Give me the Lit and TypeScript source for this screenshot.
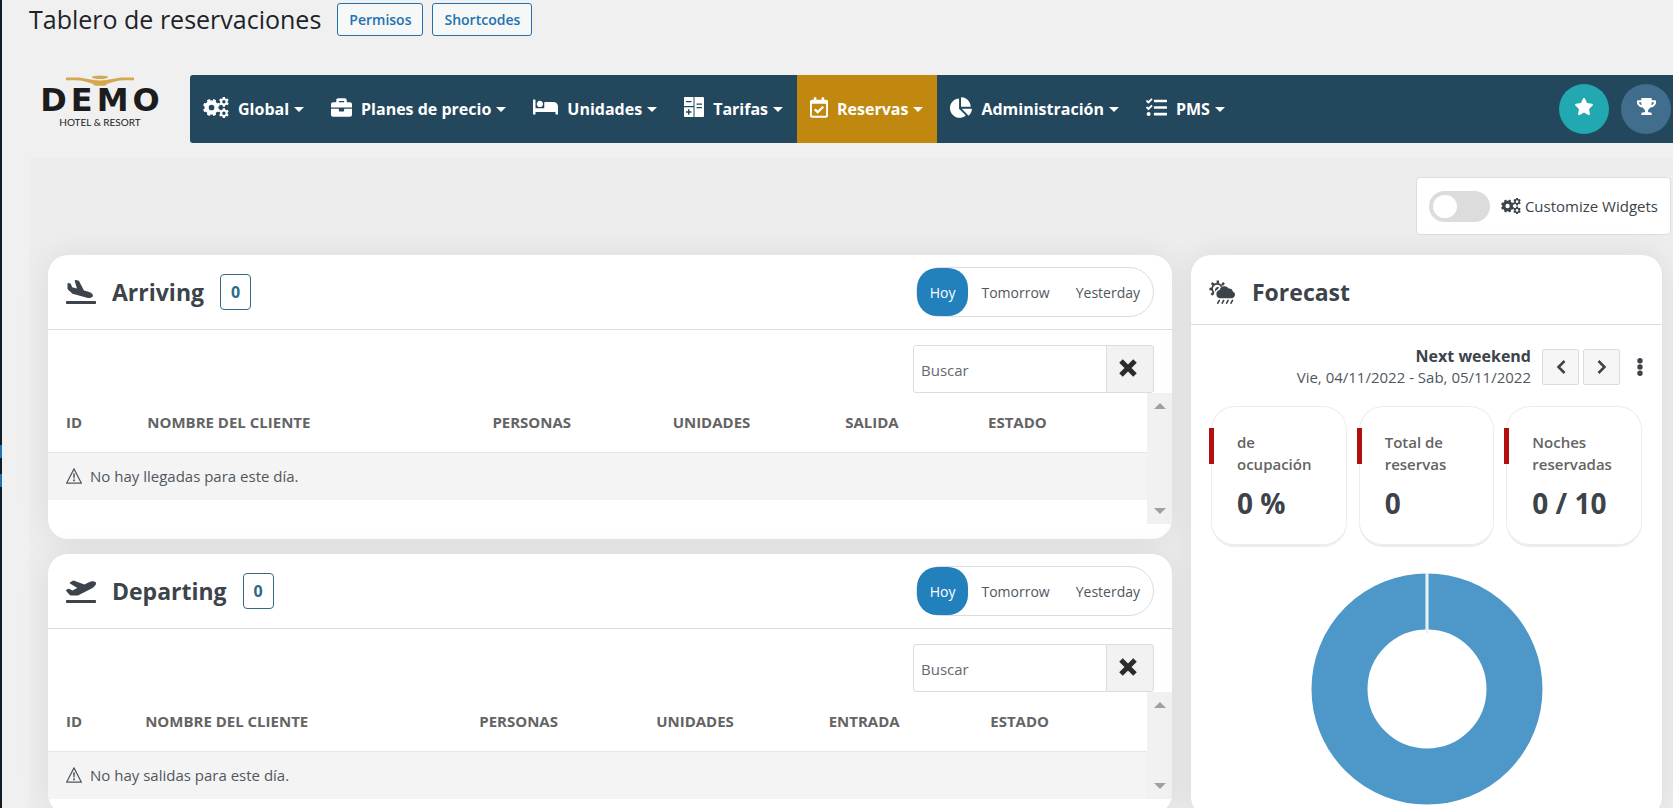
import { LitElement, html, css, svg } from "lit";
import { customElement, property, state } from "lit/decorators.js";
import { classMap } from "lit/directives/class-map.js";

/* Outline of a toothed wheel with a round hole, used by the cogs icon. */
function gear(cx: number, cy: number, outer: number, inner: number, hole: number, teeth: number, turn = 0): string {
  const step = (Math.PI * 2) / teeth;
  const pts: string[] = [];
  for (let i = 0; i < teeth; i++) {
    const a = i * step + turn;
    const spots: [number, number][] = [
      [inner, a - step * 0.32],
      [outer, a - step * 0.21],
      [outer, a + step * 0.21],
      [inner, a + step * 0.32],
    ];
    for (const [r, t] of spots) {
      pts.push(`${(cx + r * Math.cos(t)).toFixed(1)} ${(cy + r * Math.sin(t)).toFixed(1)}`);
    }
  }
  return `M${pts.join("L")}ZM${cx - hole} ${cy}a${hole} ${hole} 0 1 0 ${hole * 2} 0a${hole} ${hole} 0 1 0 ${-hole * 2} 0Z`;
}

const COGS =
  gear(210, 256, 212, 172, 70, 8, Math.PI / 8) +
  gear(514, 116, 124, 94, 42, 6, Math.PI / 6) +
  gear(514, 396, 124, 94, 42, 6, Math.PI / 6);

const ICONS: Record<string, { box: string; art: unknown }> = {
  cogs: { box: "0 0 640 512", art: svg`<path fill-rule="evenodd" d=${COGS} />` },
  briefcase: {
    box: "0 0 512 512",
    art: svg`<path d="M320 336c0 8.84-7.16 16-16 16h-96c-8.84 0-16-7.16-16-16v-48H0v144c0 25.6 22.4 48 48 48h416c25.6 0 48-22.4 48-48V288H320v48zm144-208h-80V80c0-25.6-22.4-48-48-48H176c-25.6 0-48 22.4-48 48v48H48c-25.6 0-48 22.4-48 48v80h512v-80c0-25.6-22.4-48-48-48zm-144 0H192V96h128v32z" />`,
  },
  bed: {
    box: "0 0 640 512",
    art: svg`<path d="M176 256c44.11 0 80-35.89 80-80s-35.89-80-80-80-80 35.89-80 80 35.89 80 80 80zm352-128H304c-8.84 0-16 7.16-16 16v144H64V80c0-8.84-7.16-16-16-16H16C7.16 64 0 71.16 0 80v352c0 8.84 7.16 16 16 16h32c8.84 0 16-7.16 16-16v-48h512v48c0 8.84 7.16 16 16 16h32c8.84 0 16-7.16 16-16V240c0-61.86-50.14-112-112-112z" />`,
  },
  rates: {
    box: "0 0 20 20",
    art: svg`<path fill-rule="evenodd" d="M1 0h8.500v9H0V1a1 1 0 0 1 1-1zM2 4v1.300h5.500V4zM0 10.200h9.500V20H1a1 1 0 0 1-1-1zM4 12.300v2H2v1.400h2v2h1.400v-2h2v-1.400h-2v-2zM10.500 0H19a1 1 0 0 1 1 1v18a1 1 0 0 1-1 1h-8.500zM12.500 6.500v1.300h5.500V6.500zM12.500 10v1.300h5.500V10z" />`,
  },
  calendar: {
    box: "0 0 448 512",
    art: svg`<path d="M400 64h-48V12c0-6.627-5.373-12-12-12h-40c-6.627 0-12 5.373-12 12v52H160V12c0-6.627-5.373-12-12-12h-40c-6.627 0-12 5.373-12 12v52H48C21.49 64 0 85.49 0 112v352c0 26.51 21.49 48 48 48h352c26.51 0 48-21.49 48-48V112c0-26.51-21.49-48-48-48zm-6 400H54a6 6 0 0 1-6-6V160h352v298a6 6 0 0 1-6 6zm-52.849-200.65L198.842 404.519c-4.705 4.667-12.303 4.637-16.971-.068l-75.091-75.699c-4.667-4.705-4.637-12.303.068-16.971l22.719-22.536c4.705-4.667 12.303-4.637 16.97.069l44.104 44.461 111.072-110.181c4.705-4.667 12.303-4.637 16.971.068l22.536 22.718c4.667 4.705 4.636 12.303-.069 16.97z" />`,
  },
  pie: {
    box: "0 0 544 512",
    art: svg`<path d="M527.79 288H290.5l158.03 158.03c6.04 6.04 15.98 6.53 22.19.68 38.7-36.46 65.32-85.61 73.13-140.86 1.34-9.46-6.51-17.85-16.06-17.85zm-15.83-64.8C503.72 103.74 408.26 8.28 288.8.04 279.68-.59 272 7.1 272 16.24V240h223.77c9.14 0 16.82-7.68 16.19-16.8zM224 288V50.71c0-9.55-8.39-17.4-17.84-16.06C86.99 51.49-4.1 155.6.14 280.37 4.5 408.51 114.83 513.59 243.03 511.98c50.4-.63 96.97-16.87 135.26-44.03 7.9-5.6 8.42-17.23 1.57-24.08L224 288z" />`,
  },
  tasks: {
    box: "0 0 512 512",
    art: svg`<path d="M139.61 35.5a12 12 0 0 0-17 0L58.93 98.81l-22.7-22.12a12 12 0 0 0-17 0L3.53 92.41a12 12 0 0 0 0 17l47.59 47.4a12.78 12.78 0 0 0 17.61 0l15.59-15.62L156.52 69a12.09 12.09 0 0 0 .09-17zm0 159.19a12 12 0 0 0-17 0l-63.68 63.72-22.7-22.1a12 12 0 0 0-17 0L3.53 252a12 12 0 0 0 0 17L51 316.5a12.77 12.77 0 0 0 17.6 0l15.7-15.69 72.2-72.22a12 12 0 0 0 .09-16.9zM64 368c-26.49 0-48.59 21.5-48.59 48S37.53 464 64 464a48 48 0 0 0 0-96zm432 16H208a16 16 0 0 0-16 16v32a16 16 0 0 0 16 16h288a16 16 0 0 0 16-16v-32a16 16 0 0 0-16-16zm0-320H208a16 16 0 0 0-16 16v32a16 16 0 0 0 16 16h288a16 16 0 0 0 16-16V80a16 16 0 0 0-16-16zm0 160H208a16 16 0 0 0-16 16v32a16 16 0 0 0 16 16h288a16 16 0 0 0 16-16v-32a16 16 0 0 0-16-16z" />`,
  },
  star: {
    box: "0 0 576 512",
    art: svg`<path d="M259.3 17.8L194 150.2 47.9 171.5c-26.2 3.8-36.7 36.1-17.7 54.6l105.7 103-25 145.5c-4.5 26.3 23.2 46 46.4 33.7L288 439.6l130.7 68.7c23.2 12.2 50.9-7.4 46.4-33.7l-25-145.5 105.7-103c19-18.5 8.5-50.8-17.7-54.6L382 150.2 316.7 17.8c-11.7-23.6-45.6-23.9-57.4 0z" />`,
  },
  trophy: {
    box: "0 0 576 512",
    art: svg`<path d="M552 64H448V24c0-13.3-10.7-24-24-24H152c-13.3 0-24 10.7-24 24v40H24C10.7 64 0 74.7 0 88v56c0 35.7 22.5 72.4 61.9 100.7 31.5 22.7 69.8 37.1 110 41.7C203.3 338.5 240 360 240 360v72h-48c-35.3 0-64 20.7-64 56v12c0 6.6 5.4 12 12 12h296c6.6 0 12-5.4 12-12v-12c0-35.3-28.7-56-64-56h-48v-72s36.7-21.5 68.1-73.6c40.3-4.6 78.6-19 110-41.7 39.3-28.3 61.9-65 61.9-100.7V88c0-13.3-10.7-24-24-24zM99.3 192.800C74.9 175.2 64 155.600 64 144v-16h64.2c1 32.600 5.800 61.2 12.800 86.2-15.100-5.2-29.2-12.4-41.700-21.4zM512 144c0 16.1-17.7 36.1-35.3 48.800-12.500 9-26.700 16.2-41.800 21.4 7-25 11.800-53.600 12.800-86.2H512v16z" />`,
  },
  arrival: {
    box: "0 0 640 512",
    art: svg`<path d="M624 448H16c-8.84 0-16 7.16-16 16v32c0 8.84 7.16 16 16 16h608c8.84 0 16-7.16 16-16v-32c0-8.84-7.16-16-16-16zM44.81 205.66l88.74 80a62.607 62.607 0 0 0 25.47 13.93l287.6 78.35c26.48 7.21 54.56 8.72 81 1.36 29.67-8.27 43.44-21.21 47.25-35.71 3.83-14.5-1.73-32.71-23.37-54.96-19.28-19.82-44.35-32.79-70.83-40l-97.51-26.56L282.8 30.22c-1.51-5.81-5.95-10.35-11.66-11.91L206.05.58c-10.56-2.88-20.9 5.32-20.71 16.44l47.92 164.21-102.2-27.84-27.59-67.88c-1.93-4.89-6.01-8.57-11.02-9.93L52.72 64.75c-10.34-2.82-20.53 5-20.72 15.88l.23 101.78c.19 8.91 6.03 17.34 12.58 23.25z" />`,
  },
  departure: {
    box: "0 0 640 512",
    art: svg`<path d="M624 448H16c-8.84 0-16 7.16-16 16v32c0 8.84 7.16 16 16 16h608c8.84 0 16-7.16 16-16v-32c0-8.84-7.16-16-16-16zM80.55 341.27c6.28 6.84 15.1 10.72 24.33 10.71l130.54-.18a65.62 65.62 0 0 0 29.64-7.12l290.96-147.65c26.74-13.57 50.71-32.94 67.02-58.31 18.31-28.48 20.3-49.09 13.07-63.65-7.21-14.57-24.74-25.27-58.25-27.45-29.85-1.94-59.54 5.92-86.28 19.48l-98.51 49.99-218.7-82.06a17.799 17.799 0 0 0-18-1.11L90.62 67.29c-10.67 5.41-13.25 19.65-5.17 28.53l156.22 98.1-103.21 52.38-72.35-36.47a17.804 17.804 0 0 0-16.07.02L9.91 230.22c-10.44 5.3-13.19 19.12-5.57 28.08l76.21 82.97z" />`,
  },
  weather: {
    box: "0 0 27 24",
    art: svg`<path fill="none" stroke="currentColor" stroke-width="1.800" d="M5 12.800a5 5 0 1 1 7.600-6" />
      <path fill="none" stroke="currentColor" stroke-width="2.400" d="M8.800 .4v3.200M2.600 3l2.300 2M.4 9h3M2.300 14.800l2.300-1.800M15 2.800l-2 2.300" />
      <path fill="none" stroke="currentColor" stroke-width="1.600" stroke-linecap="round" d="M10.300 20.400l-1.500 2.800M14.700 20.400l-1.500 2.800M19.100 20.400l-1.500 2.800M23.500 20.400l-1.500 2.800" />
      <path d="M11.500 18.200a4.200 4.200 0 0 1-.8-8.300 4.800 4.800 0 0 1 4.700-3.700 4.800 4.800 0 0 1 4.200 2.400 3.800 3.800 0 0 1 4.200 2.900 3.500 3.500 0 0 1-.6 6.700z" />
      <path d="M6.400 11.600a3 3 0 0 1 4-4.200 6.500 6.500 0 0 0-1.700 1.900 6 6 0 0 0-2.300 2.300z" />`,
  },
  warning: {
    box: "0 0 16 16",
    art: svg`<path fill="none" stroke="currentColor" stroke-width="1.200" stroke-linejoin="round" d="M8 .9L15.400 15.200H.6z" /><path d="M7.100 5.500h1.800l-.3 5h-1.200zM7.100 11.600h1.800v1.600H7.100z" />`,
  },
  cross: {
    box: "0 0 18 18",
    art: svg`<path fill="none" stroke="currentColor" stroke-width="5" d="M2 2l14 14M16 2L2 16" />`,
  },
  left: {
    box: "0 0 10 14",
    art: svg`<path fill="none" stroke="currentColor" stroke-width="2.500" d="M8.500 1L2.500 7l6 6" />`,
  },
  right: {
    box: "0 0 10 14",
    art: svg`<path fill="none" stroke="currentColor" stroke-width="2.500" d="M1.500 1l6 6-6 6" />`,
  },
  dots: {
    box: "0 0 6 18",
    art: svg`<circle cx="3" cy="2.700" r="2.700" /><circle cx="3" cy="9" r="2.700" /><circle cx="3" cy="15.300" r="2.700" />`,
  },
};

function icon(name: string, width: number, height: number) {
  const { box, art } = ICONS[name];
  return html`<svg viewBox=${box} width=${width} height=${height} fill="currentColor" aria-hidden="true">${art}</svg>`;
}

const shared = css`
  * {
    box-sizing: border-box;
  }
  svg {
    display: block;
    flex: none;
  }
  button {
    font: inherit;
    color: inherit;
    cursor: pointer;
    margin: 0;
    padding: 0;
    border: 0;
    background: none;
  }
`;

const card = css`
  :host {
    display: block;
    background: #fff;
    border-radius: 20px;
    box-shadow: 0 0 32px rgba(0, 0, 0, 0.08);
  }
  .head {
    display: flex;
    align-items: center;
    border-bottom: 1px solid #dcdcde;
    padding: 0 18px;
  }
  h2 {
    margin: 0 0 0 16px;
    font-size: 23px;
    line-height: 32px;
    font-weight: 700;
    color: #3c434a;
  }
`;

@customElement("nav-menu")
class NavMenu extends LitElement {
  static styles = [
    shared,
    css`
      :host {
        display: flex;
        flex: 1;
        min-width: 0;
        height: 68px;
        background: #23485e;
        border-radius: 3px 0 0 3px;
        color: #fff;
        font-size: 16px;
        font-weight: 700;
      }
      .item {
        display: flex;
        align-items: center;
        height: 68px;
        padding: 0 14px 4px 13px;
        white-space: nowrap;
      }
      .active {
        background: #c1880f;
      }
      .label {
        margin-left: 9px;
        padding-top: 4px;
      }
      .caret {
        margin: 4px 0 0 5px;
        border: 5px solid transparent;
        border-top-color: #fff;
        border-bottom: 0;
      }
      .extras {
        display: flex;
        align-items: center;
        gap: 12px;
        margin-left: auto;
        padding-right: 2px;
      }
      .round {
        display: grid;
        place-items: center;
        width: 50px;
        height: 50px;
        padding-bottom: 6px;
        border-radius: 50%;
        background: #406e8c;
      }
      .teal {
        background: #22a8b0;
      }
    `,
  ];

  private items: [string, string, number, number][] = [
    ["cogs", "Global", 26, 21],
    ["briefcase", "Planes de precio", 21, 21],
    ["bed", "Unidades", 25, 20],
    ["rates", "Tarifas", 20, 20],
    ["calendar", "Reservas", 18, 21],
    ["pie", "Administración", 22, 21],
    ["tasks", "PMS", 21, 21],
  ];

  render() {
    return html`
      ${this.items.map(
        ([glyph, label, w, h]) => html`<button class=${classMap({ item: true, active: label === "Reservas" })} aria-haspopup="menu">
          ${icon(glyph, w, h)}<span class="label">${label}</span><span class="caret"></span>
        </button>`
      )}
      <div class="extras">
        <button class="round teal" aria-label="Destacados">${icon("star", 20, 17)}</button>
        <button class="round" aria-label="Logros">${icon("trophy", 19, 17)}</button>
      </div>
    `;
  }
}

@customElement("guest-card")
class GuestCard extends LitElement {
  @property() glyph = "";
  @property() heading = "";
  @property() empty = "";
  @property({ attribute: false }) columns: [string, number][] = [];
  @property({ type: Boolean }) roomy = false;
  @state() private day = "Hoy";

  static styles = [
    shared,
    card,
    css`
      :host {
        padding-bottom: 15px;
      }
      .head {
        height: 75px;
      }
      .count {
        margin-left: 16px;
        width: 31px;
        line-height: 34px;
        text-align: center;
        border: 1px solid #336b87;
        border-radius: 4px;
        color: #2d6a87;
        font-size: 16px;
        font-weight: 700;
      }
      .days {
        display: flex;
        height: 50px;
        margin-left: auto;
        border: 1px solid #dcdcde;
        border-radius: 25px;
        font-size: 14px;
        color: #50575e;
      }
      .day {
        padding: 0 13px;
        border-radius: 20px;
      }
      .on {
        background: #2280bd;
        color: #fff;
      }
      .search {
        display: flex;
        justify-content: flex-end;
        padding: 15px 18px 0;
      }
      input {
        font: inherit;
        width: 194px;
        height: 48px;
        padding: 2px 7px 0;
        border: 1px solid #dcdcde;
        border-radius: 3px 0 0 3px;
        background: #fff;
        color: #3c434a;
      }
      input::placeholder {
        color: #646970;
        opacity: 1;
      }
      .clear {
        display: grid;
        place-items: center;
        width: 48px;
        padding: 0 4px 2px 0;
        border: 1px solid #dcdcde;
        margin-left: -1px;
        border-radius: 0 3px 3px 0;
        background: #f2f2f2;
        color: #2c2c2c;
      }
      .list {
        display: flex;
        min-height: 107px;
      }
      .roomy {
        min-height: 131px;
      }
      .data {
        flex: 1;
        min-width: 0;
      }
      table {
        width: 100%;
        table-layout: fixed;
        border-collapse: collapse;
      }
      th {
        height: 59px;
        padding: 0 18px;
        text-align: left;
        font-weight: 700;
        font-size: 15px;
        color: #646464;
        white-space: nowrap;
        border-bottom: 1px solid #e6e6e6;
      }
      td {
        height: 48px;
        padding: 0 18px;
        background: #f4f4f4;
        color: #50575e;
      }
      .note {
        display: flex;
        align-items: center;
        gap: 8px;
      }
      .bar {
        display: flex;
        flex-direction: column;
        justify-content: space-between;
        align-items: center;
        width: 25px;
        padding: 10px 0;
        background: #f1f1f1;
      }
      .up,
      .down {
        border: 6px solid transparent;
      }
      .up {
        border-bottom-color: #a0a0a0;
        border-top: 0;
      }
      .down {
        border-top-color: #a0a0a0;
        border-bottom: 0;
      }
    `,
  ];

  render() {
    return html`
      <div class="head">
        ${icon(this.glyph, 30, 24)}
        <h2>${this.heading}</h2>
        <span class="count">0</span>
        <div class="days">
          ${["Hoy", "Tomorrow", "Yesterday"].map(
            (d) => html`<button
              class=${classMap({ day: true, on: d === this.day })}
              aria-pressed=${d === this.day}
              @click=${() => (this.day = d)}
            >${d}</button>`
          )}
        </div>
      </div>
      <div class="search">
        <input type="text" placeholder="Buscar" aria-label="Buscar" />
        <button class="clear" aria-label="Borrar">${icon("cross", 18, 18)}</button>
      </div>
      <div class=${classMap({ list: true, roomy: this.roomy })}>
        <div class="data">
          <table>
            <colgroup>
              ${this.columns.map(([, w]) => html`<col style="width:${w}%" />`)}
            </colgroup>
            <thead>
              <tr>${this.columns.map(([name]) => html`<th scope="col">${name}</th>`)}</tr>
            </thead>
            <tbody>
              <tr>
                <td colspan="6"><div class="note">${icon("warning", 16, 16)}${this.empty}</div></td>
              </tr>
            </tbody>
          </table>
        </div>
        <div class="bar" aria-hidden="true"><span class="up"></span><span class="down"></span></div>
      </div>
    `;
  }
}

@customElement("forecast-card")
class ForecastCard extends LitElement {
  static styles = [
    shared,
    card,
    css`
      .head {
        height: 70px;
        padding-top: 5px;
      }
      .period {
        display: flex;
        align-items: center;
        justify-content: flex-end;
        padding: 16px 19px 0 20px;
        height: 67px;
      }
      .range {
        text-align: right;
        margin-right: 11px;
        line-height: 21px;
        font-size: 15px;
        color: #50575e;
      }
      .range strong {
        display: block;
        font-size: 16px;
        color: #3c434a;
      }
      .step {
        display: grid;
        place-items: center;
        width: 37px;
        height: 36px;
        margin-right: 4px;
        border: 1px solid #dcdcde;
        border-radius: 2px;
        background: #f6f6f6;
        color: #3c434a;
      }
      .more {
        margin-left: 13px;
        padding: 8px 0;
        color: #3c434a;
      }
      .stats {
        display: grid;
        grid-template-columns: repeat(3, minmax(0, 1fr));
        gap: 12px;
        padding: 14px 20px 0;
      }
      .stat {
        position: relative;
        height: 141px;
        padding: 24px 12px 0 25px;
        border: 1px solid #ededed;
        border-bottom-width: 3px;
        border-radius: 24px;
      }
      .stat::before {
        content: "";
        position: absolute;
        left: -3px;
        top: 21px;
        width: 5px;
        height: 36px;
        background: #b30f0f;
      }
      .name {
        font-size: 15px;
        line-height: 22px;
        font-weight: 600;
        color: #646464;
      }
      .value {
        margin-top: 10px;
        font-size: 28px;
        line-height: 36px;
        font-weight: 700;
        color: #3c434a;
        white-space: nowrap;
      }
      .chart {
        display: block;
        margin: 26px auto 12px;
      }
    `,
  ];

  render() {
    const stats = [
      ["de", "ocupación", "0 %"],
      ["Total de", "reservas", "0"],
      ["Noches", "reservadas", "0 / 10"],
    ];
    return html`
      <div class="head">${icon("weather", 27, 24)}<h2>Forecast</h2></div>
      <div class="period">
        <div class="range"><strong>Next weekend</strong>Vie, 04/11/2022 - Sab, 05/11/2022</div>
        <button class="step" aria-label="Anterior">${icon("left", 10, 14)}</button>
        <button class="step" aria-label="Siguiente">${icon("right", 10, 14)}</button>
        <button class="more" aria-label="Opciones">${icon("dots", 6, 18)}</button>
      </div>
      <div class="stats">
        ${stats.map(
          ([a, b, value]) => html`<div class="stat">
            <div class="name">${a}<br />${b}</div>
            <div class="value">${value}</div>
          </div>`
        )}
      </div>
      <svg class="chart" width="232" height="232" viewBox="0 0 232 232" role="img" aria-label="Ocupación">
        <circle cx="116" cy="116" r="87.500" fill="none" stroke="#4d98c8" stroke-width="56" />
        <path d="M116 0v60" stroke="#fff" stroke-width="3" />
        <path d="M116 0v60" stroke="#cfe2f0" stroke-width="1" />
      </svg>
    `;
  }
}

@customElement("app-root")
class AppRoot extends LitElement {
  static styles = [
    shared,
    css`
      :host {
        display: flex;
        height: 100vh;
        overflow: hidden;
        background: #f0f0f1;
        font-family: "Open Sans", "Noto Sans", sans-serif;
        font-size: 15px;
        color: #3c434a;
      }
      .rail {
        flex: none;
        width: 2px;
        padding-top: 445px;
        background: #101d24;
      }
      .mark {
        height: 13px;
        margin-bottom: 16px;
        background: #2271b1;
      }
      .page {
        flex: 1;
        min-width: 0;
        padding-left: 27px;
      }
      .title {
        display: flex;
        align-items: center;
        gap: 9px;
        height: 38px;
      }
      h1 {
        margin: 0 7px 0 0;
        font-size: 25px;
        line-height: 38px;
        font-weight: 400;
        color: #1d2327;
      }
      .action {
        padding: 0 11px;
        border: 1px solid #2271b1;
        border-radius: 3px;
        background: #f6f7f7;
        color: #2271b1;
        font-size: 14px;
        line-height: 31px;
        font-weight: 600;
        text-decoration: none;
      }
      header {
        display: flex;
        padding-top: 37px;
      }
      .logo {
        flex: none;
        width: 161px;
        display: flex;
        flex-direction: column;
        align-items: center;
        padding-right: 19px;
        color: #1c1c1c;
      }
      .name {
        font: 700 32px/28px "DejaVu Sans", sans-serif;
        letter-spacing: 4px;
        margin-right: -4px;
      }
      .sub {
        font: 400 10px/12px Lato, sans-serif;
        margin-top: 2px;
      }
      .board {
        margin-top: 15px;
        padding: 19px 11px 0 19px;
        background: #ededee;
        min-height: 100vh;
      }
      .tools {
        display: flex;
        justify-content: flex-end;
        margin-right: -9px;
      }
      .custom {
        display: flex;
        align-items: center;
        height: 58px;
        padding: 0 12px;
        border: 1px solid #dcdcde;
        border-radius: 4px;
        background: #fff;
      }
      .switch {
        appearance: none;
        width: 61px;
        height: 31px;
        margin: 0 11px 0 0;
        padding: 4px;
        border-radius: 16px;
        background: #dcdcdc;
      }
      .switch::before {
        content: "";
        display: block;
        width: 24px;
        height: 23px;
        border-radius: 50%;
        background: #fff;
      }
      .switch:checked::before {
        margin-left: auto;
      }
      .caption {
        display: flex;
        align-items: center;
        gap: 4px;
      }
      .grid {
        display: grid;
        grid-template-columns: minmax(0, 1124fr) minmax(0, 471fr);
        gap: 19px;
        align-items: start;
        margin-top: 20px;
      }
      .stack {
        display: grid;
        gap: 15px;
      }
    `,
  ];

  private arriving: [string, number][] = [
    ["ID", 7.4],
    ["NOMBRE DEL CLIENTE", 31.4],
    ["PERSONAS", 16.4],
    ["UNIDADES", 15.7],
    ["SALIDA", 13],
    ["ESTADO", 16.1],
  ];

  private departing: [string, number][] = [
    ["ID", 7.2],
    ["NOMBRE DEL CLIENTE", 30.4],
    ["PERSONAS", 16.1],
    ["UNIDADES", 15.7],
    ["ENTRADA", 14.7],
    ["ESTADO", 15.9],
  ];

  render() {
    return html`
      <aside class="rail"><div class="mark"></div><div class="mark"></div></aside>
      <div class="page">
        <div class="title">
          <h1>Tablero de reservaciones</h1>
          <a class="action" href="#permisos">Permisos</a>
          <a class="action" href="#shortcodes">Shortcodes</a>
        </div>
        <header>
          <div class="logo">
            <svg width="68" height="11" viewBox="0 0 68 11" fill="#d3a850" aria-hidden="true">
              <ellipse cx="34" cy="2.200" rx="8" ry="1.700" />
              <path d="M0 2.500h10c9 0 15 2.800 24 3 9-.2 15-3 24-3h10v2.700H58c-6 0-10 1.500-15 3-3 .8-3 2.600-5 2.600h-8c-2 0-2-1.800-5-2.600-5-1.500-9-3-15-3H0z" />
            </svg>
            <div class="name">DEMO</div>
            <div class="sub">HOTEL &amp; RESORT</div>
          </div>
          <nav-menu></nav-menu>
        </header>
        <main class="board">
          <div class="tools">
            <div class="custom">
              <input class="switch" type="checkbox" role="switch" id="widgets" />
              <label class="caption" for="widgets">${icon("cogs", 20, 16)}Customize Widgets</label>
            </div>
          </div>
          <div class="grid">
            <div class="stack">
              <guest-card roomy glyph="arrival" heading="Arriving" empty="No hay llegadas para este día." .columns=${this.arriving}></guest-card>
              <guest-card glyph="departure" heading="Departing" empty="No hay salidas para este día." .columns=${this.departing}></guest-card>
            </div>
            <forecast-card></forecast-card>
          </div>
        </main>
      </div>
    `;
  }
}
